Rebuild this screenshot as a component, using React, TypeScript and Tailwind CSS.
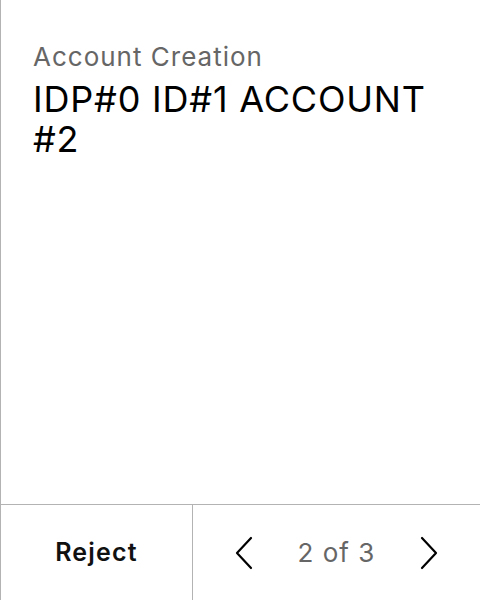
const Chevron = ({ dir }: { dir: "left" | "right" }) => (
  <svg width="20" height="34" viewBox="0 0 20 34" fill="none" className="block">
    <path
      d={dir === "left" ? "M17 2 L3 17 L17 32" : "M3 2 L17 17 L3 32"}
      stroke="#000"
      strokeWidth="2.2"
      strokeLinecap="round"
      strokeLinejoin="round"
    />
  </svg>
);

export default function App() {
  return (
    <div
      className="w-[480px] h-[600px] flex flex-col bg-white border-l border-[#b3b3b3]"
      style={{ fontFamily: "Inter, 'Noto Sans', sans-serif" }}
    >
      <div className="flex-1 pl-[32px] pr-6 pt-[40px]">
        <div className="text-[26px] leading-[34px] tracking-[1px] text-[#666666]">Account Creation</div>
        <div className="mt-[5px] text-[36px] leading-[40px] tracking-[0.8px] text-black">
          IDP#0 ID#1 ACCOUNT #2
        </div>
      </div>
      <div className="h-[96px] flex border-t border-[#b3b3b3]">
        <button className="w-[191px] flex items-center justify-center text-[25px] font-semibold tracking-[1.2px] text-[#111]">
          Reject
        </button>
        <div className="flex-1 flex items-center justify-between px-[41px] border-l border-[#b3b3b3]">
          <Chevron dir="left" />
          <span className="text-[26px] tracking-[1px] text-[#666666]">2 of 3</span>
          <Chevron dir="right" />
        </div>
      </div>
    </div>
  );
}
